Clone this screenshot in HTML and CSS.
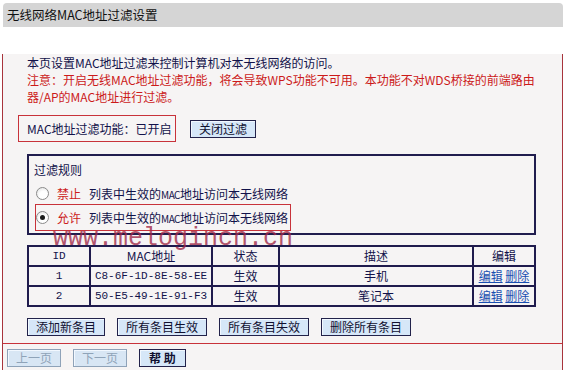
FILE: index.html
```html
<!DOCTYPE html>
<html lang="zh-CN">
<head>
  <meta charset="UTF-8" />
  <title>无线网络MAC地址过滤设置</title>
  <link rel="stylesheet" href="styles.css">
</head>
<body>

<div class="page">
  <div class="title">无线网络MAC地址过滤设置</div>
  <div class="panel">
    <p class="intro">
      本页设置MAC地址过滤来控制计算机对本无线网络的访问。<br>
      <span class="warn">注意：开启无线MAC地址过滤功能，将会导致WPS功能不可用。本功能不对WDS桥接的前端路由<br>器/AP的MAC地址进行过滤。</span>
    </p>

    <div class="status-row">
      <div class="status-box">MAC地址过滤功能：已开启</div>
      <button class="btn">关闭过滤</button>
    </div>

    <div class="rules">
      <div class="rules-title">过滤规则</div>
      <div class="rule">
        <span class="radio"></span>
        <span class="rule-key">禁止</span>
        <span>列表中生效的<span class="latin">MAC</span>地址访问本无线网络</span>
      </div>
      <div class="rule rule-marked">
        <span class="radio checked"></span>
        <span class="rule-key">允许</span>
        <span>列表中生效的<span class="latin">MAC</span>地址访问本无线网络</span>
      </div>
    </div>

    <table class="list">
      <tr>
        <th class="c-id mono">ID</th>
        <th class="c-mac">MAC地址</th>
        <th class="c-state">状态</th>
        <th class="c-desc">描述</th>
        <th class="c-edit">编辑</th>
      </tr>
      <tr>
        <td class="mono">1</td>
        <td class="mono">C8-6F-1D-8E-58-EE</td>
        <td>生效</td>
        <td>手机</td>
        <td><a href="#">编辑</a> <a href="#">删除</a></td>
      </tr>
      <tr>
        <td class="mono">2</td>
        <td class="mono">50-E5-49-1E-91-F3</td>
        <td>生效</td>
        <td>笔记本</td>
        <td><a href="#">编辑</a> <a href="#">删除</a></td>
      </tr>
    </table>

    <div class="actions">
      <button class="btn">添加新条目</button>
      <button class="btn">所有条目生效</button>
      <button class="btn">所有条目失效</button>
      <button class="btn">删除所有条目</button>
    </div>

    <div class="pager">
      <button class="btn disabled">上一页</button>
      <button class="btn disabled">下一页</button>
      <button class="btn help">帮 助</button>
    </div>

    <!-- watermark over the rules box and table -->
    <div class="watermark">www.melogincn.cn</div>
  </div>
</div>

</body>
</html>
```

FILE: styles.css
```css
* {
  margin: 0;
  padding: 0;
  box-sizing: border-box;
}

body {
  background: #fff;
  font-family: "Noto Sans CJK SC", "DejaVu Sans", sans-serif;
  font-size: 12px;
  color: #12124a;
}

.page {
  width: 561px;
  margin: 3px 0 0 2px;
}

.title {
  height: 24px;
  line-height: 24px;
  margin-left: 1px;
  padding-left: 4px;
  background: #d5d5d5;
  border-radius: 4px 4px 0 0;
  color: #111;
  font-size: 12.5px;
}

.panel {
  position: relative;
  background: #f6f4f4;
  border: 1px solid #a8343c;
  border-top: none;
  padding-bottom: 3px;
}

.intro {
  margin: 27px 0 0 24px;
  line-height: 17px;
}

.warn {
  color: #cc1a1a;
}

.status-row {
  display: flex;
  align-items: center;
  margin: 10px 0 0 15px;
}

.status-box {
  width: 158px;
  height: 27px;
  line-height: 25px;
  padding-left: 8px;
  border: 1px solid #c8323a;
  white-space: nowrap;
}

.btn {
  font-family: inherit;
  font-size: 12px;
  height: 18px;
  line-height: 16px;
  padding: 0 8px;
  background: #d6e7f8;
  color: #101030;
  border: 1px solid #22224a;
  box-shadow: inset 1px 1px 0 #f2f8ff;
  white-space: nowrap;
}

.status-row .btn {
  margin-left: 14px;
}

.rules {
  width: 509px;
  margin: 12px 0 0 24px;
  padding: 5px 0 2px;
  border: 2px solid #211d4e;
}

.rules-title {
  line-height: 17px;
  padding-left: 5px;
}

.rule {
  display: flex;
  align-items: center;
  gap: 8px;
  height: 22px;
  margin-top: 4px;
  padding-left: 7px;
  white-space: nowrap;
}

.rule-marked {
  width: fit-content;
  height: 27px;
  margin: 0 0 0 6px;
  padding: 0 2px 0 0;
  border: 1px solid #c8323a;
}

.rule-key {
  color: #cc1a1a;
}

.latin {
  font-size: 10px;
  letter-spacing: -0.5px;
}

.radio {
  flex: none;
  width: 13px;
  height: 13px;
  border-radius: 50%;
  border: 1px solid #8a8a8a;
  background: radial-gradient(circle at 60% 65%, #fff 40%, #dcdcdc 100%);
  position: relative;
}

.radio.checked::after {
  content: "";
  position: absolute;
  left: 3px;
  top: 3px;
  width: 5px;
  height: 5px;
  border-radius: 50%;
  background: #1a1a1a;
}

.list {
  width: 509px;
  margin: 10px 0 0 24px;
  border-collapse: collapse;
  border: 2px solid #1f1b4d;
}

.list th,
.list td {
  height: 20px;
  padding: 0;
  border: 2px solid #1f1b4d;
  text-align: center;
  font-weight: normal;
  line-height: 16px;
}

.c-id { width: 62px; }
.c-mac { width: 122px; }
.c-state { width: 67px; }
.c-desc { width: 194px; }
.c-edit { width: 62px; }

.mono {
  font-family: "Liberation Mono", monospace;
  font-size: 11px;
}

.list a {
  color: #1a4fb0;
  text-decoration: underline;
}

.actions {
  display: flex;
  gap: 12px;
  margin: 11px 0 0 24px;
}

.pager {
  display: flex;
  gap: 12px;
  margin-top: 7px;
  padding: 5px 0 0 4px;
  border-top: 1px solid #c8323a;
}

.btn.disabled {
  color: #8fa3b8;
  border-color: #8ea2b8;
  background: #d8e6f4;
}

.btn.help {
  padding: 0 9px;
  font-weight: bold;
}

.watermark {
  position: absolute;
  left: 50px;
  top: 170px;
  font-family: "Liberation Mono", monospace;
  font-size: 25px;
  line-height: 30px;
  color: rgba(160, 40, 70, 0.8);
  pointer-events: none;
}
```
